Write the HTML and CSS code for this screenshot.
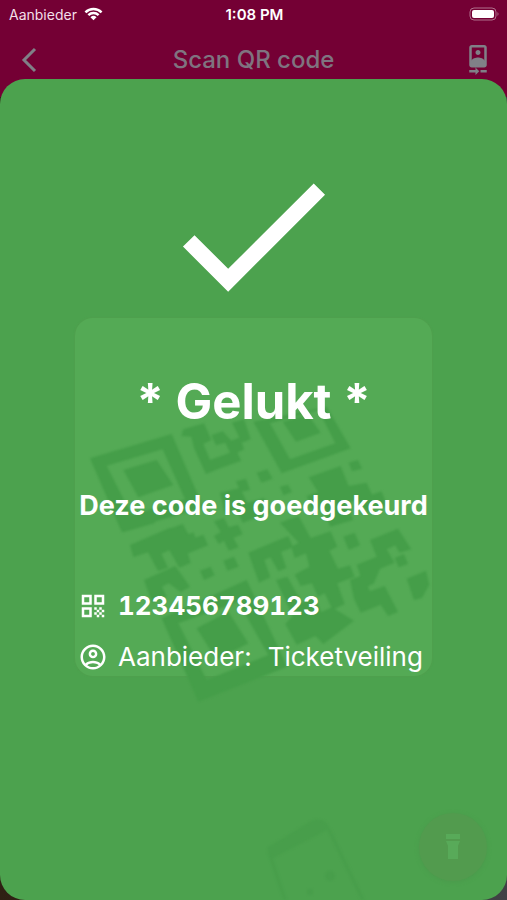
FILE: index.html
```html
<!DOCTYPE html>
<html lang="nl">

<head>
    <meta charset="UTF-8">
    <meta name="viewport" content="width=device-width, initial-scale=1">
    <title>Scan QR code</title>
    <link rel="stylesheet" href="styles.css">
</head>

<body>
    <header class="top">
        <div class="status-bar">
            <span class="carrier">Aanbieder
                <svg class="wifi" viewBox="0 0 20 14" aria-hidden="true">
                    <path d="M1.5 5.2a12.2 12.2 0 0 1 17 0M4.6 8.2a7.8 7.8 0 0 1 10.8 0" />
                    <path class="dot" d="M10 13.6l3.2-3.2a4.6 4.6 0 0 0-6.4 0z" />
                </svg>
            </span>
            <span class="time">1:08 PM</span>
            <svg class="battery" viewBox="0 0 31 14" aria-hidden="true">
                <rect class="shell" x="1" y="1" width="26" height="12" rx="4" />
                <rect x="3" y="3" width="22" height="8" rx="2" />
                <path class="tip" d="M28.500 5v4q2-2 0-4z" />
            </svg>
        </div>
        <nav class="nav-bar">
            <button class="icon-button" type="button" aria-label="Terug">
                <svg class="back" viewBox="0 0 16 26" aria-hidden="true">
                    <path d="M14 2L3 13l11 11" />
                </svg>
            </button>
            <h1>Scan QR code</h1>
            <button class="icon-button" type="button" aria-label="Camera wisselen">
                <svg class="camera" viewBox="0 0 24 24" aria-hidden="true">
                    <path d="M10 20H5v2h5v2l3-3-3-3v2zm4 0v2h5v-2h-5zM12 8c1.100 0 2-.9 2-2s-.9-2-2-2-2 .9-2 2 .9 2 2 2zm5-8H7C5.900 0 5 .9 5 2v14c0 1.100.9 2 2 2h10c1.100 0 2-.9 2-2V2c0-1.100-.9-2-2-2zM7 2h10v10.500c0-1.670-3.330-2.500-5-2.500s-5 .83-5 2.500V2z" />
                </svg>
            </button>
        </nav>
    </header>

    <main class="sheet">
        <svg class="check" viewBox="0 0 18 14" aria-hidden="true">
            <path d="M5.800 10.880L1.630 6.710.2 8.130l5.600 5.580L17.800 1.710 16.400.3z" />
        </svg>

        <section class="scan-window">
            <!-- Scanned code shining through the sheet -->
            <svg class="scanned-code" viewBox="0 0 1170 1260" aria-hidden="true">
                <g fill-rule="evenodd">
                    <path d="M90 475L335 402 430 622 185 695zM140 497L215 645 375 598 308 448z" />
                    <path d="M190 510L290 480 340 555 235 592z" />
                    <path d="M580 365L800 320 872 445 665 520zM630 370L690 478 826 430 775 330z" />
                    <path d="M668 365L745 345 782 398 708 425z" />
                    <path d="M305 955L560 840 682 1100 415 1205zM355 970L440 1140 625 1065 535 905z" />
                    <path d="M410 985L505 935 565 1030 470 1080z" />
                </g>
                <path d="M370 388l62-18 22 50-24 12 20 48 60-22-14-30-28 8-14-30 34-12 26 28 26-10 12 36-20 10 12 24-62 22-44 18-36-78-8-34-30-2z" />
                <path d="M516 368l36-10 20 60-26 10z" />
                <path d="M590 518l32-10 16 28-34 12zM866 488l28-8 12 26-30 8zM528 544l30-8 12 34-28 6zM660 560l24-6 12 22-26 10z" />
                <path d="M746 532l96-34 24 60 54-10 16 36 28-10 18 42-60 20-30-36-36 10 24 50-70 20-16-50-40-6-14-36 34-12z" />
                <path d="M480 578l60-14 22 44 50-14 20 44-84 30-18-38-36 10zM320 720l-12-26 60-22 26 46 36-14 14 32-84 34z" />
                <path d="M175 665l90-24 20 28-96 28zM210 735l120-52 20 34 50-20 12 30-34 14 14 48-34 14-30-52-24 10 20 42-30 10-30-56-44 14z" />
                <path d="M462 664l30-10 14 28 28-8 14 28-28 12 16 28-30 10-14-30-16 10-14-24 20-12z" />
                <path d="M490 782l32-12 14 30-34 12zM420 812l32-12 12 26-32 14z" />
                <path d="M252 840l94-42 44 62-28 16-36-26-20 10 14 30-44 18z" />
                <path d="M565 758l120-50 14 34-36 14 16 48-24 10-24-42-18 8 18 52-34 16z" />
                <path d="M660 668l56-20 36 66 60-20 20 46-24 12 26 54 36-10 14 34-52 20 22 62-36 18-24-50-20 10-18-40-34 8-18-34 44-24-10-40-34 14-10-34 22-12z" />
                <path d="M850 710l34-12 16 38-34 14zM930 720l84-34 40 62-36 10-12-22-26 12 24 40-44 18-18 44-28 14-24-70 60-24z" />
                <path d="M1004 774l28-12 12 30-28 10zM1040 836l58-24 10 42-22 40-24 6z" />
                <path d="M648 840l34-10 44 78 36-16 22 44 32-14 66 40-92 70-24-24-56 26-34-62 22-24z" />
                <path d="M870 840l40-16 20 50 44-16 40 78-30 12-22-34-60 24-20-42z" />
            </svg>
            <h2>* Gelukt *</h2>
            <p class="message">Deze code is goedgekeurd</p>
            <div class="details">
                <div class="detail code">
                    <svg viewBox="0 0 24 24" aria-hidden="true">
                        <path d="M3 11h8V3H3v8zm2-6h4v4H5V5zM3 21h8v-8H3v8zm2-6h4v4H5v-4zM13 3v8h8V3h-8zm6 6h-4V5h4v4zM19 19h2v2h-2zM13 13h2v2h-2zM15 15h2v2h-2zM13 17h2v2h-2zM15 19h2v2h-2zM17 17h2v2h-2zM17 13h2v2h-2zM19 15h2v2h-2z" />
                    </svg>
                    <span>123456789123</span>
                </div>
                <div class="detail">
                    <svg viewBox="0 0 24 24" aria-hidden="true">
                        <path d="M12 2C6.480 2 2 6.480 2 12s4.480 10 10 10 10-4.480 10-10S17.520 2 12 2zM7.350 18.500C8.660 17.560 10.260 17 12 17s3.340.56 4.650 1.500C15.340 19.440 13.740 20 12 20s-3.340-.56-4.650-1.500zm10.790-1.380C16.450 15.800 14.320 15 12 15s-4.450.8-6.140 2.120C4.700 15.730 4 13.950 4 12c0-4.420 3.580-8 8-8s8 3.580 8 8c0 1.950-.7 3.730-1.860 5.120zM12 6c-1.930 0-3.500 1.570-3.500 3.500S10.070 13 12 13s3.500-1.570 3.500-3.500S13.930 6 12 6zm0 5c-.83 0-1.500-.67-1.500-1.500S11.170 8 12 8s1.500.67 1.500 1.500S12.830 11 12 11z" />
                    </svg>
                    <span>Aanbieder:</span>
                    <span class="vendor">Ticketveiling</span>
                </div>
            </div>
        </section>

        <svg class="phone" viewBox="0 0 110 84" aria-hidden="true">
            <path class="edge" d="M4 36L52 6q8-2 12 8M4 36L20 84M64 14L98 84" />
            <path d="M2 32L46 5q12-5 18 8L8 42z" />
            <circle cx="65" cy="60" r="5" />
            <circle cx="45" cy="76" r="3" />
        </svg>
        <button class="torch" type="button" aria-label="Zaklamp">
            <svg viewBox="0 0 16 28" aria-hidden="true">
                <path d="M1 1h14v5H1zM1 8h14l-2 5v13H3V13z" />
            </svg>
        </button>
    </main>
</body>

</html>
```
FILE: styles.css
```css
* {
    box-sizing: border-box;
}

body {
    display: flex;
    flex-direction: column;
    min-height: 100vh;
    margin: 0;
    background: linear-gradient(to right, #2f2013, #404145);
    color: #fff;
    font-family: Inter, "Liberation Sans", sans-serif;
}

button {
    padding: 0;
    border: none;
    background: none;
    cursor: pointer;
}

svg {
    display: block;
    flex: none;
    fill: currentColor;
}

.top {
    padding-bottom: 18px;
    background: #740034;
}

.status-bar {
    display: grid;
    grid-template-columns: 1fr auto 1fr;
    align-items: center;
    height: 28px;
    padding: 0 7px 0 9px;
    font-size: 14px;
}

.carrier {
    display: flex;
    align-items: center;
    gap: 7px;
    color: #f3dfe8;
}

.wifi {
    width: 19px;
    height: 14px;
    fill: none;
    stroke: #fff;
    stroke-width: 2.6;
}

.wifi .dot {
    fill: #fff;
    stroke: none;
}

.time {
    font-size: 15px;
    font-weight: 600;
}

.battery {
    justify-self: end;
    width: 31px;
    height: 14px;
}

.battery .shell {
    fill: none;
    stroke: #b0708c;
}

.battery .tip {
    fill: #b0708c;
}

.nav-bar {
    display: flex;
    align-items: center;
    justify-content: space-between;
    height: 51px;
    padding: 12px 14px 0;
    color: #7f7480;
}

.nav-bar h1 {
    margin: 0;
    font-size: 24px;
    font-weight: 500;
    line-height: 30px;
}

.icon-button {
    display: flex;
    align-items: center;
    justify-content: center;
    width: 30px;
    height: 30px;
    color: #808087;
}

.back {
    width: 16px;
    height: 26px;
    fill: none;
    stroke: currentColor;
    stroke-width: 3;
}

.camera {
    width: 30px;
    height: 30px;
}

.sheet {
    position: relative;
    flex: 1;
    margin-top: -18px;
    padding: 102px 75px 120px;
    border-radius: 25px;
    background: #4ca24e;
    overflow: hidden;
}

.check {
    width: 146px;
    height: 113px;
    margin: 0 auto 24px;
}

.scan-window {
    position: relative;
    display: flex;
    flex-direction: column;
    align-items: center;
    min-height: 358px;
    padding-top: 54px;
    border-radius: 18px;
    background: #54aa55;
    box-shadow: 0 0 2px #559b4e;
    white-space: nowrap;
}

.scanned-code {
    position: absolute;
    top: -18px;
    left: 50%;
    width: 390px;
    height: 420px;
    margin-left: -194px;
    fill: #459e49;
    filter: blur(1px);
}

.scan-window h2,
.message,
.details {
    position: relative;
    margin: 0;
}

.scan-window h2 {
    font-size: 49px;
    font-weight: 700;
    line-height: 60px;
}

.scan-window .message {
    margin-top: 58px;
    font-size: 27px;
    font-weight: 700;
    line-height: 32px;
}

.scan-window .details {
    align-self: stretch;
    display: grid;
    gap: 19px;
    margin-top: 68px;
    padding-left: 3px;
}

.detail {
    display: flex;
    align-items: center;
    font-size: 26px;
    line-height: 32px;
}

.detail svg {
    width: 30px;
    height: 30px;
    margin-right: 10px;
}

.code {
    font-weight: 700;
    font-variant-numeric: tabular-nums;
}

.vendor {
    margin-left: 16px;
}

.phone {
    position: absolute;
    right: 132px;
    bottom: 0;
    width: 110px;
    height: 84px;
    fill: #489e4b;
    filter: blur(1px);
}

.phone .edge {
    fill: none;
    stroke: #489e4b;
    stroke-width: 3;
}

.torch {
    position: absolute;
    right: 20px;
    bottom: 19px;
    display: flex;
    align-items: center;
    justify-content: center;
    width: 68px;
    height: 68px;
    border-radius: 50%;
    background: #529b4e;
    box-shadow: 0 1px 4px #4b9a4c;
    color: #58aa59;
}

.torch svg {
    width: 16px;
    height: 28px;
}
```
